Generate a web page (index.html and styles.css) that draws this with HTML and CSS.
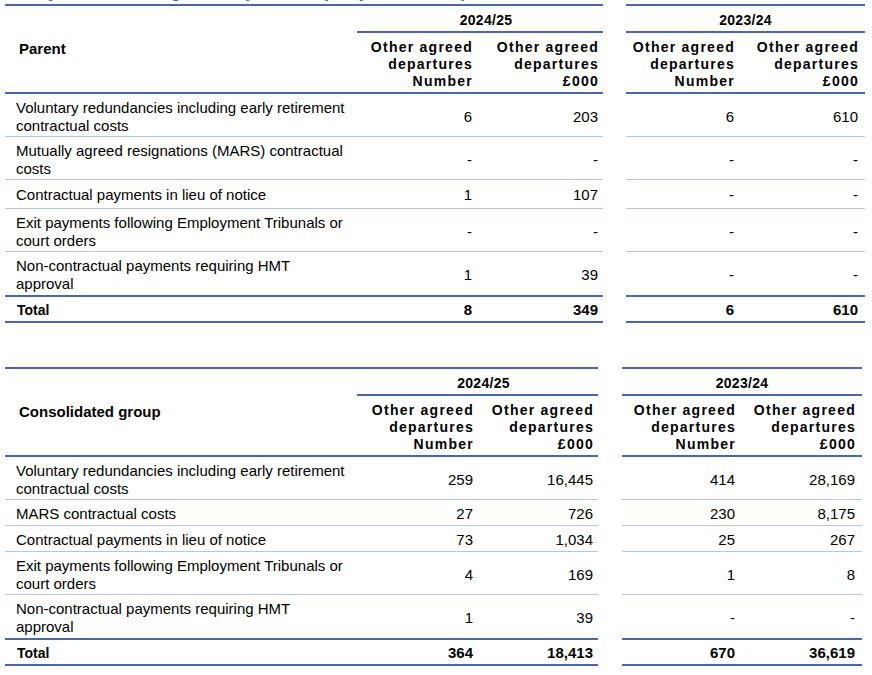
FILE: index.html
```html
<!DOCTYPE html>
<html lang="en">
<head>
<meta charset="utf-8">
<title>Other agreed departures</title>
<link rel="stylesheet" href="styles.css">
</head>
<body>
<main class="page">
  <h2 class="cutoff-title">Analysis of other agreed departures (subject to audit)</h2>

  <table class="dep dep-parent">
    <colgroup>
      <col class="c-label"><col class="c-n1"><col class="c-n2"><col class="c-gap"><col class="c-n3"><col class="c-n4">
    </colgroup>
    <thead>
      <tr>
        <th class="label-head" rowspan="2">Parent</th>
        <th class="year year-first" colspan="2">2024/25</th>
        <th class="gap" rowspan="2"></th>
        <th class="year" colspan="2">2023/24</th>
      </tr>
      <tr class="col-head">
        <th>Other agreed<br>departures<br>Number</th>
        <th>Other agreed<br>departures<br>£000</th>
        <th>Other agreed<br>departures<br>Number</th>
        <th class="end">Other agreed<br>departures<br>£000</th>
      </tr>
    </thead>
    <tbody>
      <tr>
        <td class="label">Voluntary redundancies including early retirement<br>contractual costs</td>
        <td>6</td><td>203</td><td class="gap"></td><td>6</td><td class="end">610</td>
      </tr>
      <tr>
        <td class="label">Mutually agreed resignations (MARS) contractual<br>costs</td>
        <td>-</td><td>-</td><td class="gap"></td><td>-</td><td class="end">-</td>
      </tr>
      <tr class="single">
        <td class="label">Contractual payments in lieu of notice</td>
        <td>1</td><td>107</td><td class="gap"></td><td>-</td><td class="end">-</td>
      </tr>
      <tr>
        <td class="label">Exit payments following Employment Tribunals or<br>court orders</td>
        <td>-</td><td>-</td><td class="gap"></td><td>-</td><td class="end">-</td>
      </tr>
      <tr class="last">
        <td class="label">Non-contractual payments requiring HMT<br>approval</td>
        <td>1</td><td>39</td><td class="gap"></td><td>-</td><td class="end">-</td>
      </tr>
      <tr class="total">
        <td class="label">Total</td>
        <td>8</td><td>349</td><td class="gap"></td><td>6</td><td class="end">610</td>
      </tr>
    </tbody>
  </table>

  <table class="dep dep-group">
    <colgroup>
      <col class="c-label"><col class="c-n1"><col class="c-n2"><col class="c-gap"><col class="c-n3"><col class="c-n4">
    </colgroup>
    <thead>
      <tr>
        <th class="label-head" rowspan="2">Consolidated group</th>
        <th class="year year-first" colspan="2">2024/25</th>
        <th class="gap" rowspan="2"></th>
        <th class="year" colspan="2">2023/24</th>
      </tr>
      <tr class="col-head">
        <th>Other agreed<br>departures<br>Number</th>
        <th>Other agreed<br>departures<br>£000</th>
        <th>Other agreed<br>departures<br>Number</th>
        <th class="end">Other agreed<br>departures<br>£000</th>
      </tr>
    </thead>
    <tbody>
      <tr>
        <td class="label">Voluntary redundancies including early retirement<br>contractual costs</td>
        <td>259</td><td>16,445</td><td class="gap"></td><td>414</td><td class="end">28,169</td>
      </tr>
      <tr class="single">
        <td class="label">MARS contractual costs</td>
        <td>27</td><td>726</td><td class="gap"></td><td>230</td><td class="end">8,175</td>
      </tr>
      <tr class="single">
        <td class="label">Contractual payments in lieu of notice</td>
        <td>73</td><td>1,034</td><td class="gap"></td><td>25</td><td class="end">267</td>
      </tr>
      <tr>
        <td class="label">Exit payments following Employment Tribunals or<br>court orders</td>
        <td>4</td><td>169</td><td class="gap"></td><td>1</td><td class="end">8</td>
      </tr>
      <tr class="last">
        <td class="label">Non-contractual payments requiring HMT<br>approval</td>
        <td>1</td><td>39</td><td class="gap"></td><td>-</td><td class="end">-</td>
      </tr>
      <tr class="total">
        <td class="label">Total</td>
        <td>364</td><td>18,413</td><td class="gap"></td><td>670</td><td class="end">36,619</td>
      </tr>
    </tbody>
  </table>
</main>
</body>
</html>
```

FILE: styles.css
```css
html, body {
  margin: 0;
  padding: 0;
  background: #ffffff;
}

body {
  font-family: "Liberation Sans", Arial, sans-serif;
  color: #000000;
}

.page {
  padding: 0 0 0 5px;
}

.cutoff-title {
  margin: -20px 0 2px;
  padding-left: 4px;
  font-size: 18px;
  line-height: 22px;
  font-weight: bold;
  color: #2e75b6;
  white-space: nowrap;
}

.dep {
  border-collapse: separate;
  border-spacing: 0;
  table-layout: fixed;
}

.dep-parent {
  width: 860px;
}

.dep-group {
  width: 857px;
  margin-top: 44px;
}

/* column widths */
.dep-parent .c-label { width: 352px; }
.dep-parent .c-n1 { width: 120px; }
.dep-parent .c-n2 { width: 126px; }
.dep-parent .c-gap { width: 23px; }
.dep-parent .c-n3 { width: 113px; }
.dep-parent .c-n4 { width: 126px; }

.dep-group .c-label { width: 352px; }
.dep-group .c-n1 { width: 121px; }
.dep-group .c-n2 { width: 120px; }
.dep-group .c-gap { width: 24px; }
.dep-group .c-n3 { width: 118px; }
.dep-group .c-n4 { width: 122px; }

/* header */
.label-head {
  text-align: left;
  font-size: 15px;
  font-weight: bold;
  line-height: 18px;
  padding: 0 0 0 14px;
  vertical-align: middle;
  border-top: 2px solid #4a66ac;
  border-bottom: 2px solid #4a66ac;
}

.year {
  text-align: center;
  font-size: 14px;
  font-weight: bold;
  letter-spacing: 0.3px;
  line-height: 18px;
  padding: 5px 0 2px;
  border-top: 2px solid #4a66ac;
  border-bottom: 2px solid #4a66ac;
}

.year-first {
  padding-left: 12px;
}

.gap {
  border: none;
  padding: 0;
}

.col-head th {
  text-align: right;
  vertical-align: bottom;
  font-size: 14px;
  font-weight: bold;
  letter-spacing: 1.25px;
  line-height: 17px;
  padding: 6px 4px 2px 0;
  border-bottom: 2px solid #4a66ac;
}

.col-head th.end {
  padding-right: 6px;
}

/* body */
.dep td {
  text-align: right;
  vertical-align: middle;
  font-size: 15px;
  line-height: 18px;
  padding: 5px 5px 1px 0;
  border-bottom: 1px solid #b4c6e7;
}

.dep td.end {
  padding-right: 7px;
}

.dep td.label {
  text-align: left;
  padding-left: 11px;
}

.dep td.gap {
  border: none;
  padding: 0;
}

.dep-parent tr.single td {
  padding-top: 6px;
  padding-bottom: 4px;
}

.dep-group tr.single td {
  padding-top: 5px;
  padding-bottom: 2px;
}

.dep tr.last td {
  padding-bottom: 2px;
  border-bottom: 2px solid #4a66ac;
}

.dep tr.total td {
  font-weight: bold;
  padding-top: 4px;
  padding-bottom: 2px;
  border-bottom: 2px solid #4a66ac;
}

.dep tr.total td.label {
  font-size: 14px;
  padding-left: 12px;
}

.dep tr.last td.gap,
.dep tr.total td.gap {
  border: none;
  padding: 0;
}
```
